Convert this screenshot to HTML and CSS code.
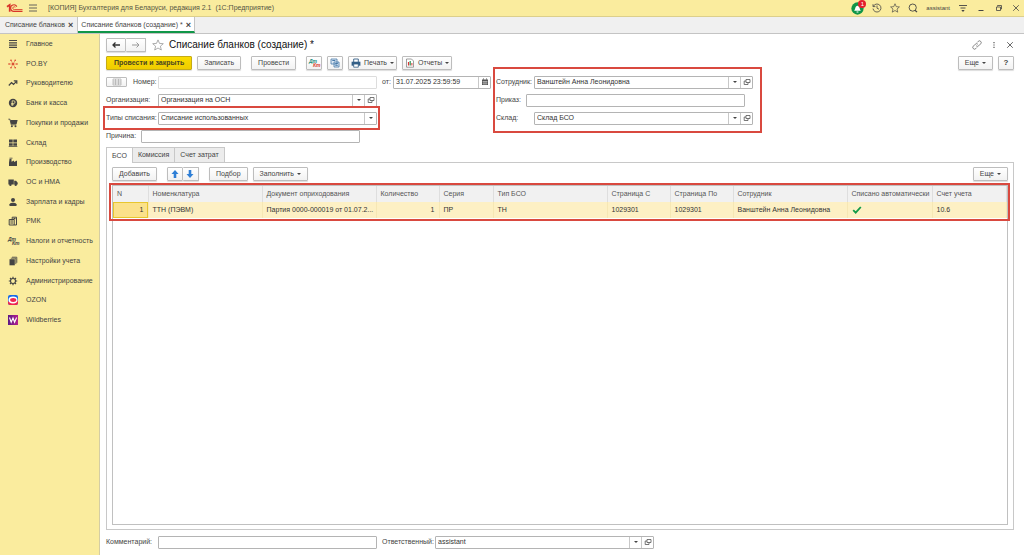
FILE: index.html
```html
<!doctype html>
<html lang="ru">
<head>
    <meta charset="utf-8">
    <meta name="viewport" content="width=device-width, initial-scale=1">
    <title>Списание бланков (создание)</title>
    <link rel="stylesheet" href="styles.css">
</head>
<body>
    <svg class="sprite" aria-hidden="true">
        <symbol id="open" viewBox="0 0 8 8"><path d="M3 1.5h4v3H3zM3 3H1.2v3.5H5V4.5" fill="none" stroke="#555" stroke-width=".8"/></symbol>
        <symbol id="close" viewBox="0 0 8 8"><path d="M1.2 1.2l5.6 5.6M6.8 1.2L1.2 6.8" fill="none" stroke="currentColor" stroke-width=".8"/></symbol>
        <symbol id="star" viewBox="0 0 12 12"><path d="M6 .9l1.500 3.500 3.800.3-2.900 2.500.9 3.800L6 9l-3.300 2 .9-3.800L.7 4.700l3.800-.3z" fill="none" stroke="currentColor" stroke-width=".8"/></symbol>
    </svg>

    <header class="titlebar">
        <svg class="logo" viewBox="0 0 17 10"><path d="M1 3.700l2.700-1.900V8.800" fill="none" stroke="#d8352a" stroke-width="1.700"/><path d="M10.800 3.600A3.300 3.300 0 1 0 8.300 8.400H16.500" fill="none" stroke="#d8352a" stroke-width="1.200"/><path d="M9.300 4.300A1.400 1.400 0 1 0 8.300 6.600H16.500" fill="none" stroke="#d8352a" stroke-width=".9"/></svg>
        <button class="icon" aria-label="Меню"><svg viewBox="0 0 10 10"><path d="M1 2h8M1 5h8M1 8h8" stroke="#555" stroke-width=".9"/></svg></button>
        <span class="app-name">[КОПИЯ] Бухгалтерия для Беларуси, редакция 2.1&nbsp; (1С:Предприятие)</span>
        <div class="tools">
            <button class="icon bell" aria-label="Уведомления">
                <svg viewBox="0 0 14 14"><circle cx="7" cy="7" r="6.600" fill="#109648"/><path d="M3.300 9.500c1.600-1.200.9-5.500 3.700-5.500s2.100 4.300 3.700 5.500zM6 10.200h2v1H6z" fill="#fff"/></svg>
                <span class="badge">1</span>
            </button>
            <button class="icon" aria-label="История"><svg viewBox="0 0 10 10"><path d="M1.300 3.400A4 4 0 1 1 1 5.600M1 1.200v2.400h2.400M5 2.500V5.200l2 1" fill="none" stroke="#444" stroke-width=".8"/></svg></button>
            <button class="icon" aria-label="Избранное"><svg viewBox="0 0 12 12"><use href="#star"/></svg></button>
            <button class="icon" aria-label="Поиск"><svg viewBox="0 0 10 10"><circle cx="4.700" cy="4.600" r="3.600" fill="none" stroke="#444" stroke-width=".9"/><path d="M7 7.200l2 1.900" stroke="#444" stroke-width="1.200"/></svg></button>
            <a class="user" href="#">assistant</a>
            <button class="icon" aria-label="Настройки"><svg viewBox="0 0 10 10"><path d="M1 2.500h8M2.500 5h5" stroke="#444" stroke-width=".9"/><path d="M3.300 7h3.400L5 8.900z" fill="#444"/></svg></button>
            <button class="icon" aria-label="Свернуть"><svg viewBox="0 0 10 10"><path d="M2.500 7.500h5" stroke="#444"/></svg></button>
            <button class="icon" aria-label="Развернуть"><svg viewBox="0 0 10 10"><path d="M3.500 3.500v-1h4v3.500h-1M2.500 4h4v3.500h-4z" fill="none" stroke="#444" stroke-width=".8"/></svg></button>
            <button class="icon small" aria-label="Закрыть"><svg viewBox="0 0 8 8"><use href="#close"/></svg></button>
        </div>
    </header>

    <div class="windows">
        <div class="window-tab"><a href="#">Списание бланков</a><button class="tab-close" aria-label="Закрыть">×</button></div>
        <div class="window-tab active"><a href="#">Списание бланков (создание) *</a><button class="tab-close" aria-label="Закрыть">×</button></div>
    </div>

    <div class="workspace">
        <nav class="sidebar">
            <div class="sections">
                <a href="#"><svg viewBox="0 0 10 10"><path d="M1 1.500h8M1 3.800h8M1 6.100h8M1 8.400h8" stroke="#444" stroke-width="1.200"/></svg>Главное</a>
                <a href="#"><svg viewBox="0 0 10 10"><path d="M5 5L3 1.300M5 5l2.200-3.700M5 5h4M5 5l2.200 3.700M5 5L3 8.700M5 5H1" stroke="#e2583a" stroke-width=".6"/><g fill="#d8402c"><circle cx="5" cy="5" r="1.100"/><circle cx="3" cy="1.300" r=".8"/><circle cx="7.200" cy="1.300" r=".8"/><circle cx="9" cy="5" r=".8"/><circle cx="1" cy="5" r=".8"/><circle cx="3" cy="8.700" r=".8"/><circle cx="7.200" cy="8.700" r=".8"/></g></svg>PO.BY</a>
                <a href="#"><svg viewBox="0 0 10 10"><path d="M.8 7.500l2.700-3 2 1.800 3-3M5.800 2.800h3v3" fill="none" stroke="#444" stroke-width="1.200"/></svg>Руководителю</a>
                <a href="#"><svg viewBox="0 0 10 10"><circle cx="5" cy="5" r="4.200" fill="#444"/><path d="M4.200 8V2.800h1.500a1.300 1.300 0 0 1 0 2.700H3.200M3.200 6.700h2.600" fill="none" stroke="#f9eb9e" stroke-width=".8"/></svg>Банк и касса</a>
                <a href="#"><svg viewBox="0 0 10 10"><path d="M.4 1.200h1.500l1.400 5.600h5" fill="none" stroke="#444" stroke-width=".9"/><path d="M2.300 2h7.300l-1 4H3.200z" fill="#444"/><circle cx="3.900" cy="8.300" r="1" fill="#444"/><circle cx="7.500" cy="8.300" r="1" fill="#444"/></svg>Покупки и продажи</a>
                <a href="#"><svg viewBox="0 0 10 10"><path d="M1 1.500h3.700v3H1zM5.300 1.500H9v3H5.300zM1 5.200h3.700v2.600H1zM5.300 5.200H9v2.600H5.300zM.7 8.300h8.600v.7H.7z" fill="#444"/></svg>Склад</a>
                <a href="#"><svg viewBox="0 0 10 10"><path d="M1 9V5.500L1.500 2h2v2.800L6 3.500V5l3-1.500V9z" fill="#444"/><path d="M1.500 1.200h3" stroke="#444" stroke-width=".8"/></svg>Производство</a>
                <a href="#"><svg viewBox="0 0 10 10"><path d="M.4 2.500h5.400v5H.4zM6.200 3.700h1.900l1.600 2v1.800H6.200z" fill="#444"/><circle cx="2.400" cy="7.700" r="1.200" fill="#444"/><circle cx="7.700" cy="7.700" r="1.200" fill="#444"/></svg>ОС и НМА</a>
                <a href="#"><svg viewBox="0 0 10 10"><circle cx="5" cy="3" r="2" fill="#444"/><path d="M1.500 9V7.300Q1.800 6 4.200 5.700h1.600q2.400.3 2.700 1.600V9z" fill="#444"/></svg>Зарплата и кадры</a>
                <a href="#"><svg viewBox="0 0 10 10"><path d="M1.200 3.500h5V9h-5zM4.200 3.500V1.200h4.300V9H6.200" fill="none" stroke="#444"/><path d="M2.300 5h2.800M2.300 7h2.800M5.500 2.700h2" stroke="#444" stroke-width="1.200"/></svg>РМК</a>
                <a href="#"><svg viewBox="0 0 10 10"><text x="0" y="5" class="glyph">Дт</text><text x="4" y="9" class="glyph">Кт</text></svg>Налоги и отчетность</a>
                <a href="#"><svg viewBox="0 0 10 10"><path d="M1.500 3.200h5.300V9.300H1.500z" fill="#444"/><path d="M2.800 2.200h5v5.900M4 1.200h4.800v5.600" fill="none" stroke="#444" stroke-width=".8"/></svg>Настройки учета</a>
                <a href="#"><svg viewBox="0 0 10 10"><circle cx="5" cy="5" r="2.500" fill="none" stroke="#444" stroke-width="1.100"/><path d="M5 .8v1.700M5 7.500v1.700M.8 5h1.700M7.500 5h1.700M2 2l1.200 1.200M6.800 6.800L8 8M8 2L6.800 3.200M3.200 6.800L2 8" stroke="#444" stroke-width="1.200"/></svg>Администрирование</a>
                <a href="#"><svg viewBox="0 0 10 10"><rect width="10" height="10" rx="2" fill="#1769e8"/><path d="M0 6.500l10-1V8a2 2 0 0 1-2 2H2a2 2 0 0 1-2-2z" fill="#ef254f"/><ellipse cx="5" cy="5" rx="4.500" ry="3.400" fill="#fff"/><ellipse cx="5.200" cy="5" rx="3.100" ry="1.900" fill="#ef254f"/></svg>OZON</a>
                <a href="#"><svg viewBox="0 0 10 10"><defs><linearGradient id="wb"><stop stop-color="#5b1a87"/><stop offset="1" stop-color="#b4208d"/></linearGradient></defs><rect width="10" height="10" fill="url(#wb)"/><path d="M1.500 2.500L3.200 7.300 5 3l1.600 4.300 2-4.800" fill="none" stroke="#fff" stroke-width="1.100"/></svg>Wildberries</a>
            </div>
        </nav>

        <main class="document">
            <div class="doc-head">
                <div class="joined">
                    <button class="btn nav" aria-label="Назад"><svg viewBox="0 0 10 8"><path d="M9 4H2M4.500 1.500L2 4l2.500 2.500" fill="none" stroke="#333" stroke-width="1.300"/></svg></button>
                    <button class="btn nav" aria-label="Вперед"><svg viewBox="0 0 10 8"><path d="M1 4h7M5.500 1.500L8 4 5.500 6.500" fill="none" stroke="#999"/></svg></button>
                </div>
                <button class="icon fav" aria-label="В избранное"><svg viewBox="0 0 12 12"><use href="#star"/></svg></button>
                <h1>Списание бланков (создание) *</h1>
                <div class="doc-tools">
                    <button class="icon" aria-label="Ссылка"><svg viewBox="0 0 10 10"><path d="M4.200 5.800a1.800 1.800 0 0 0 2.500 0l2-2A1.700 1.700 0 0 0 6.200 1.400L5.100 2.500M5.800 4.200a1.800 1.800 0 0 0-2.500 0l-2 2a1.700 1.700 0 0 0 2.500 2.400L4.900 7.500" fill="none" stroke="#666" stroke-width=".8"/></svg></button>
                    <button class="icon" aria-label="Еще"><svg viewBox="0 0 10 10"><path d="M4.400 2h1.200v1.200H4.400zM4.400 4.400h1.200v1.200H4.400zM4.400 6.800h1.200V8H4.400z" fill="#555"/></svg></button>
                    <button class="icon small" aria-label="Закрыть"><svg viewBox="0 0 8 8"><use href="#close"/></svg></button>
                </div>
            </div>

            <div class="commands">
                <button class="btn primary">Провести и закрыть</button>
                <button class="btn save">Записать</button>
                <button class="btn post">Провести</button>
                <button class="btn square" aria-label="Дт Кт"><svg viewBox="0 0 10 10"><text x="0" y="5" class="glyph dt">Дт</text><text x="4" y="9" class="glyph kt">Кт</text></svg></button>
                <button class="btn square" aria-label="Структура"><svg viewBox="0 0 10 10"><path d="M1 1h6v5H1zM4 4h5v5H4z" fill="#dce8f3" stroke="#4779a8" stroke-width=".8"/><path d="M2.300 2.500h3M5.300 5.500h2.500M5.300 7.300h2.500" stroke="#4779a8"/></svg></button>
                <button class="btn with-icon"><svg viewBox="0 0 10 10"><path d="M2.700 4V1h4.600v3" fill="#fff" stroke="#345f86" stroke-width=".9"/><path d="M.6 3.700h8.800v4H.6z" fill="#345f86"/><path d="M2.700 6h4.600v3.200H2.700z" fill="#fff" stroke="#345f86" stroke-width=".8"/></svg>Печать<i class="caret"></i></button>
                <button class="btn with-icon"><svg viewBox="0 0 10 10"><path d="M1.500 1h5l2 2v6.200h-7z" fill="#fff" stroke="#777" stroke-width=".7"/><path d="M3.500 7.500V4" stroke="#d33" stroke-width="1.200"/><path d="M5.200 7.500V3" stroke="#2a9250" stroke-width="1.200"/><path d="M6.900 7.500V5" stroke="#d33"/></svg>Отчеты<i class="caret"></i></button>
                <button class="btn more">Еще<i class="caret"></i></button>
                <button class="btn help">?</button>
            </div>

            <form class="fields">
                <div class="column">
                    <div class="field">
                        <button type="button" class="btn list" aria-label="Нумерация"><svg viewBox="0 0 10 8"><path d="M1 1h8v6H1zM1 3h8M1 5h8M3.500 1v6M6.500 1v6" fill="none" stroke="#aaa" stroke-width=".7"/></svg></button>
                        <label class="number" for="number">Номер:</label>
                        <div class="box pale"><input id="number" type="text"></div>
                        <label class="from" for="date">от:</label>
                        <div class="box date">
                            <input id="date" type="text" value="31.07.2025 23:59:59">
                            <button type="button" aria-label="Календарь"><svg viewBox="0 0 8 8"><path d="M1 1.500h6V7H1z" fill="#555"/><path d="M1.500 3.500h5M1.500 5.200h5M3 3v4M5 3v4" stroke="#fff" stroke-width=".4"/><path d="M2.500.5v1M5.500.5v1" stroke="#555"/></svg></button>
                        </div>
                    </div>
                    <div class="field">
                        <label for="org">Организация:</label>
                        <div class="box">
                            <select id="org"><option>Организация на ОСН</option></select>
                            <span class="drop"><i class="caret"></i></span>
                            <button type="button" aria-label="Открыть"><svg><use href="#open"/></svg></button>
                        </div>
                    </div>
                    <div class="field kind marked">
                        <label for="kind">Типы списания:</label>
                        <div class="box">
                            <select id="kind"><option>Списание использованных</option></select>
                            <span class="drop"><i class="caret"></i></span>
                        </div>
                    </div>
                    <div class="field">
                        <label class="short" for="reason">Причина:</label>
                        <div class="box"><input id="reason" type="text"></div>
                    </div>
                </div>
                <div class="column side marked">
                    <div class="field">
                        <label for="person">Сотрудник:</label>
                        <div class="box">
                            <select id="person"><option>Ванштейн Анна Леонидовна</option></select>
                            <span class="drop"><i class="caret"></i></span>
                            <button type="button" aria-label="Открыть"><svg><use href="#open"/></svg></button>
                        </div>
                    </div>
                    <div class="field">
                        <label class="short" for="order">Приказ:</label>
                        <div class="box"><input id="order" type="text"></div>
                    </div>
                    <div class="field">
                        <label for="store">Склад:</label>
                        <div class="box">
                            <select id="store"><option>Склад БСО</option></select>
                            <span class="drop"><i class="caret"></i></span>
                            <button type="button" aria-label="Открыть"><svg><use href="#open"/></svg></button>
                        </div>
                    </div>
                </div>
            </form>

            <div class="pages" role="tablist">
                <button class="page active" role="tab" aria-selected="true">БСО</button>
                <button class="page" role="tab">Комиссия</button>
                <button class="page" role="tab">Счет затрат</button>
            </div>
            <section class="panel">
                <div class="table-commands">
                    <button class="btn">Добавить</button>
                    <div class="joined">
                        <button class="btn arrow" aria-label="Вверх"><svg viewBox="0 0 10 10"><path d="M5 1l3.500 4H6.300v4H3.700V5H1.500z" fill="#2f7fd6"/></svg></button>
                        <button class="btn arrow" aria-label="Вниз"><svg viewBox="0 0 10 10"><path d="M5 9L1.500 5h2.200V1h2.600v4h2.200z" fill="#2f7fd6"/></svg></button>
                    </div>
                    <button class="btn">Подбор</button>
                    <button class="btn">Заполнить<i class="caret"></i></button>
                    <button class="btn more">Еще<i class="caret"></i></button>
                </div>
                <div class="grid">
                    <div class="marked">
                        <table>
                            <colgroup>
                                <col class="c-n"><col class="c-wide"><col class="c-wide"><col class="c-mid"><col class="c-series"><col class="c-wide"><col class="c-mid"><col class="c-mid"><col class="c-wide"><col class="c-auto"><col>
                            </colgroup>
                            <thead>
                                <tr><th>N</th><th>Номенклатура</th><th>Документ оприходования</th><th>Количество</th><th>Серия</th><th>Тип БСО</th><th>Страница С</th><th>Страница По</th><th>Сотрудник</th><th>Списано автоматически</th><th>Счет учета</th></tr>
                            </thead>
                            <tbody>
                                <tr><td class="num current">1</td><td>ТТН (ПЭВМ)</td><td>Партия 0000-000019 от 01.07.2...</td><td class="num">1</td><td>ПР</td><td>ТН</td><td>1029301</td><td>1029301</td><td>Ванштейн Анна Леонидовна</td><td><svg viewBox="0 0 10 10"><path d="M1.200 5.200l2.500 2.500L8.800 2" fill="none" stroke="#119a48" stroke-width="1.800"/></svg></td><td>10.6</td></tr>
                            </tbody>
                        </table>
                    </div>
                </div>
            </section>

            <footer class="field">
                <label for="comment">Комментарий:</label>
                <div class="box"><input id="comment" type="text"></div>
                <label class="owner" for="owner">Ответственный:</label>
                <div class="box">
                    <select id="owner"><option>assistant</option></select>
                    <span class="drop"><i class="caret"></i></span>
                    <button type="button" aria-label="Открыть"><svg><use href="#open"/></svg></button>
                </div>
            </footer>
        </main>
    </div>
</body>
</html>
```

FILE: styles.css
```css
* {
    box-sizing: border-box;
}
body {
    display: flex;
    flex-direction: column;
    min-height: 100vh;
    margin: 0;
    background-color: #ffffff;
    color: #444444;
    font-family: "Liberation Sans", Arial, sans-serif;
    font-size: 7px;
    line-height: 10px;
}
button, input, select {
    margin: 0;
    padding: 0;
    border: none;
    background: none;
    color: inherit;
    font: inherit;
}
button {
    cursor: pointer;
}
a {
    color: inherit;
    text-decoration: none;
}
svg {
    display: block;
    flex: none;
    width: 10px;
    height: 10px;
    overflow: visible;
}
.sprite {
    position: absolute;
    width: 0;
    height: 0;
}
.glyph {
    fill: #444444;
    font-size: 5px;
    font-style: italic;
    font-weight: bold;
}
.dt {
    fill: #1c8c7c;
}
.kt {
    fill: #d8402c;
}
.caret {
    display: block;
    border: 2px solid transparent;
    border-top-color: #444444;
    border-bottom: none;
}

/* title bar */
.titlebar {
    display: flex;
    align-items: center;
    height: 17px;
    padding: 0 4px 0 6px;
    border-bottom: 1px solid #dccf8c;
    background-color: #faec9e;
}
.logo {
    width: 17px;
    margin-right: 5px;
}
.app-name {
    margin-left: 10px;
    color: #555544;
}
.tools {
    display: flex;
    align-items: center;
    gap: 8px;
    margin-left: auto;
}
.bell {
    position: relative;
}
.bell svg {
    width: 13px;
    height: 13px;
}
.badge {
    position: absolute;
    top: -2px;
    right: -2px;
    width: 8px;
    height: 8px;
    border-radius: 50%;
    background-color: #e3202c;
    color: #ffffff;
    font-size: 6px;
    line-height: 8px;
}
.user {
    font-size: 6px;
}
.small svg {
    width: 8px;
    height: 8px;
}

/* open windows */
.windows {
    display: flex;
    height: 17px;
    border-bottom: 1px solid #c4c4c4;
    background-color: #f0f0f0;
}
.window-tab {
    display: flex;
    align-items: center;
    gap: 3px;
    padding: 0 4px 0 5px;
    border-right: 1px solid #c4c4c4;
}
.window-tab.active {
    padding: 2px 3px 0;
    border-bottom: 2px solid #109648;
    background-color: #ffffff;
}
.tab-close {
    font-size: 9px;
    font-weight: bold;
}

.workspace {
    display: flex;
    flex: 1;
}
.sidebar {
    flex: none;
    width: 100px;
    border-right: 1px solid #d4cda4;
    background-color: #faec9e;
}
.sections {
    display: grid;
    grid-auto-rows: 1fr;
    height: 296px;
}
.sections a {
    display: flex;
    align-items: center;
    gap: 8px;
    padding-left: 8px;
}

/* document */
.document {
    display: flex;
    flex: 1;
    flex-direction: column;
    min-width: 0;
    padding: 4px 10px 6px 6px;
}
.doc-head {
    display: flex;
    align-items: center;
    height: 14px;
    margin-bottom: 4px;
}
h1 {
    margin: 0 0 0 5px;
    color: #111111;
    font-size: 10px;
    font-weight: normal;
    line-height: 12px;
}
.fav {
    margin-left: 6px;
    color: #999999;
}
.fav svg {
    width: 12px;
    height: 12px;
}
.doc-tools {
    display: flex;
    align-items: center;
    gap: 7px;
    margin-left: auto;
}
.btn {
    display: flex;
    align-items: center;
    justify-content: center;
    gap: 3px;
    height: 14px;
    padding: 0 6px;
    border: 1px solid #bdbdbd;
    border-radius: 1px;
    background: linear-gradient(#ffffff, #f2f2f2);
    box-shadow: 0 1px 1px #dddddd;
}
.joined {
    display: flex;
}
.joined .btn + .btn {
    border-left: none;
}
.nav {
    width: 20px;
}
.nav svg {
    height: 8px;
}
.commands, .table-commands {
    display: flex;
    align-items: center;
    gap: 5px;
}
.primary {
    padding: 0 7px;
    border-color: #c5ab17;
    background: linear-gradient(#fbdc00, #efcc00);
    color: #4a4520;
    font-weight: bold;
}
.save, .post {
    margin-right: 5px;
}
.with-icon {
    padding: 0 2px;
}
.square {
    width: 16px;
    padding: 0;
}
.more {
    margin-left: auto;
}
.help {
    width: 16px;
    padding: 0;
    font-size: 8px;
    font-weight: bold;
}

/* form fields */
.fields {
    display: flex;
    align-items: flex-start;
    margin: 5px 0 4px;
}
.column {
    display: flex;
    flex-direction: column;
    gap: 4px;
}
.side {
    margin-left: 5px;
}
.field {
    display: flex;
    align-items: center;
    height: 14px;
}
.field.kind {
    align-self: flex-start;
}
.field label {
    flex: none;
    width: 52px;
    white-space: nowrap;
}
.field .short {
    width: 35px;
}
.side label {
    width: 38px;
}
.side .short {
    width: 30px;
}
.list {
    width: 21px;
    height: 10px;
    padding: 0;
    box-shadow: none;
}
.list svg {
    height: 8px;
}
.field .number {
    width: 25px;
    margin-left: 6px;
}
.field .from {
    width: 11px;
    margin-left: 5px;
}
.field .owner {
    width: 53px;
    margin-left: 5px;
}
.box {
    display: flex;
    width: 219px;
    height: 13px;
    border: 1px solid #b4b4b4;
    border-radius: 1px;
    background-color: #ffffff;
    color: #333333;
}
.box.pale {
    border-color: #dddddd;
}
.box.date {
    width: 98px;
}
.box input, .box select {
    flex: 1;
    min-width: 0;
    padding: 0 2px;
    appearance: none;
}
.box button, .drop {
    display: flex;
    align-items: center;
    justify-content: center;
    width: 12px;
    border-left: 1px solid #c8c8c8;
}
.box svg {
    width: 8px;
    height: 8px;
}

/* red frames around the parts to fill in */
.marked {
    position: relative;
}
.marked::after {
    content: "";
    position: absolute;
    inset: -5px -3px;
    border: 2px solid #d9493f;
    pointer-events: none;
}
.side.marked::after {
    inset: -8px -9px -8px -3px;
}
.grid .marked::after {
    inset: -3px -3px -3px -4px;
}

/* pages and table */
.pages {
    display: flex;
    height: 15px;
}
.page {
    padding: 0 5px;
    border: 1px solid #c8c8c8;
    border-left: none;
    border-bottom: none;
    background-color: #ececec;
}
.page.active {
    position: relative;
    height: 16px;
    border-left: 1px solid #c8c8c8;
    background-color: #ffffff;
}
.panel {
    display: flex;
    flex: 1;
    flex-direction: column;
    gap: 4px;
    margin-bottom: 5px;
    padding: 4px 5px;
    border: 1px solid #c8c8c8;
}
.table-commands .joined {
    margin: 0 5px;
}
.arrow {
    width: 16px;
    padding: 0;
}
.grid {
    flex: 1;
    border: 1px solid #c0c0c0;
}
table {
    width: 100%;
    border-collapse: collapse;
    table-layout: fixed;
}
.c-n {
    width: 35px;
}
.c-wide {
    width: 114px;
}
.c-mid {
    width: 63px;
}
.c-series {
    width: 54px;
}
.c-auto {
    width: 85px;
}
th, td {
    height: 16px;
    padding: 0 4px;
    border-right: 1px solid #dedede;
    overflow: hidden;
    text-align: left;
    white-space: nowrap;
}
th {
    background-color: #f1f1f1;
    color: #555555;
    font-weight: normal;
}
td {
    border-right-color: #f6e7b4;
    background-color: #fdf0c4;
    color: #333333;
}
.num {
    text-align: right;
}
.current {
    outline: 1px solid #e8c62e;
    outline-offset: -1px;
    background-color: #fbe18a;
}
```
